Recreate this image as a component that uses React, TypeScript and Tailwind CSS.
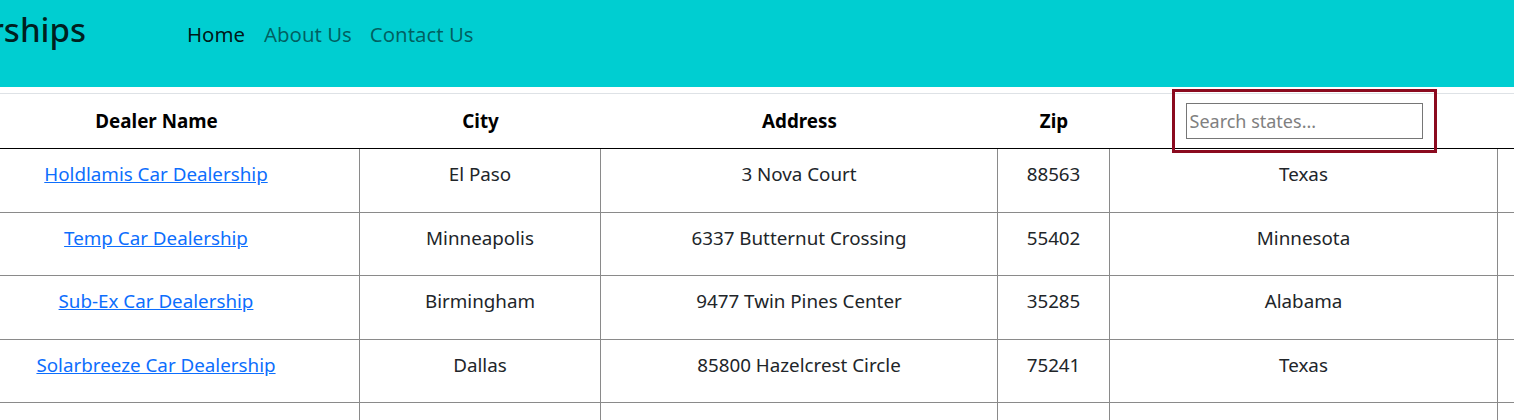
import React from "react";

const rows = [
  { name: "Holdlamis Car Dealership", city: "El Paso", address: "3 Nova Court", zip: "88563", state: "Texas" },
  { name: "Temp Car Dealership", city: "Minneapolis", address: "6337 Butternut Crossing", zip: "55402", state: "Minnesota" },
  { name: "Sub-Ex Car Dealership", city: "Birmingham", address: "9477 Twin Pines Center", zip: "35285", state: "Alabama" },
  { name: "Solarbreeze Car Dealership", city: "Dallas", address: "85800 Hazelcrest Circle", zip: "75241", state: "Texas" },
  { name: "", city: "", address: "", zip: "", state: "" },
];

const grid = "grid grid-cols-[407px_241px_397px_112px_388px_300px]";

export default function App() {
  return (
    <div className="w-[1514px] h-[420px] overflow-hidden bg-white text-[#212529] [font-family:'Noto_Sans',sans-serif]">
      <nav className="h-[87px] bg-[#00ced1] flex items-start">
        <div className="ml-[-114px] mt-[8px] flex items-baseline">
          <span className="text-[33px] leading-[44px] font-medium text-[rgba(0,0,0,0.85)] w-[200px] text-right whitespace-nowrap">Dealerships</span>
          <a className="ml-[101px] text-[20.4px] leading-[30px] text-[rgba(0,0,0,0.9)]">Home</a>
          <a className="ml-[19px] text-[20.4px] leading-[30px] text-[rgba(0,0,0,0.55)]">About Us</a>
          <a className="ml-[18px] text-[20.4px] leading-[30px] text-[rgba(0,0,0,0.55)]">Contact Us</a>
        </div>
      </nav>
      <div className="mt-[6px] ml-[-47px]">
        <div className={`${grid} h-[56px] border-t border-b border-t-[#dee2e6] border-b-black font-bold text-black text-[18.8px]`}>
          <div className="flex items-center justify-center pt-[1px]">Dealer Name</div>
          <div className="flex items-center justify-center pt-[1px]">City</div>
          <div className="flex items-center justify-center pt-[1px]">Address</div>
          <div className="flex items-center justify-center pt-[1px]">Zip</div>
          <div className="flex items-center justify-center">
            <input
              placeholder="Search states..."
              className="w-[237px] h-[36px] border border-[#767676] rounded-none px-[3px] text-[18px] font-normal placeholder:text-[#808080] outline-solid outline-3 outline-[#8b0a1f] outline-offset-[11px]"
            />
          </div>
          <div></div>
        </div>
        {rows.map((r, i) => (
          <div key={i} className={`${grid} h-[63.5px] border-b border-[#8a8a8a] text-[18.8px] leading-[24px]`}>
            <div className="border-r border-[#8a8a8a] pt-[13px] text-center">
              {r.name && <a className="text-[#0d6efd] underline">{r.name}</a>}
            </div>
            <div className="border-r border-[#8a8a8a] pt-[13px] text-center">{r.city}</div>
            <div className="border-r border-[#8a8a8a] pt-[13px] text-center">{r.address}</div>
            <div className="border-r border-[#8a8a8a] pt-[13px] text-center">{r.zip}</div>
            <div className="border-r border-[#8a8a8a] pt-[13px] text-center">{r.state}</div>
            <div></div>
          </div>
        ))}
      </div>
    </div>
  );
}
